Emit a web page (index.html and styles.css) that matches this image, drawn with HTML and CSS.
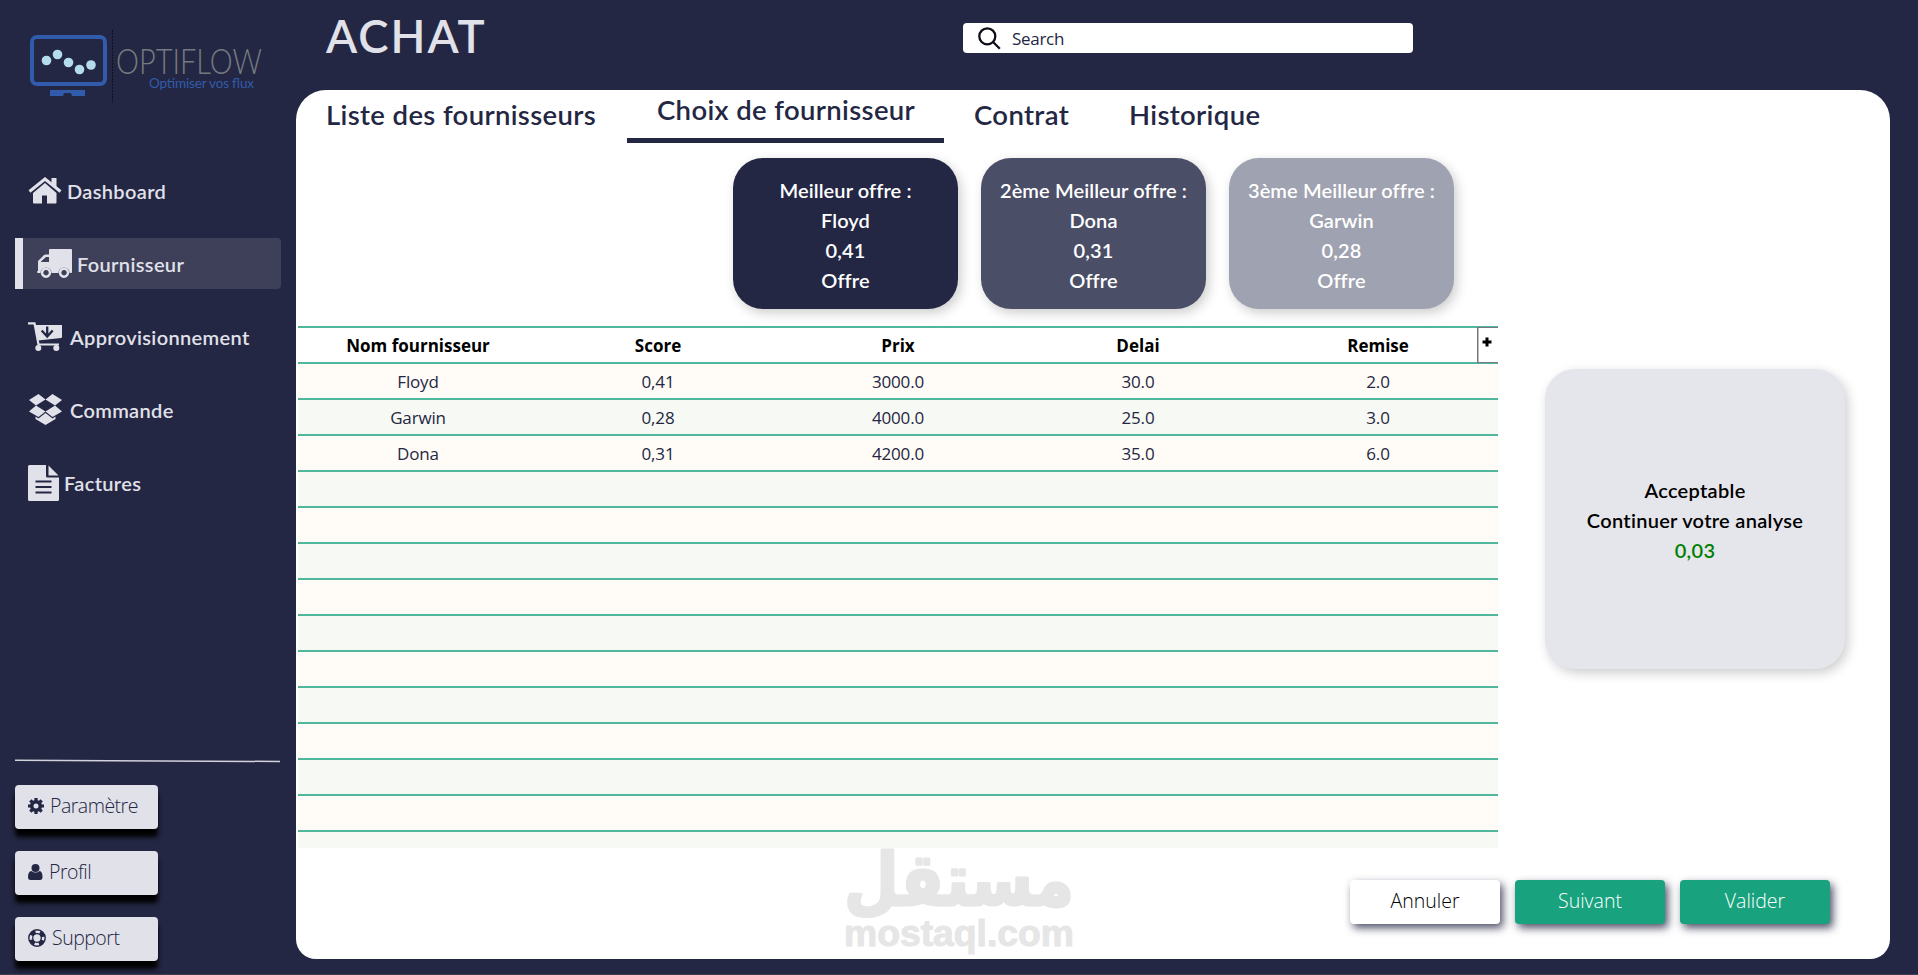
FILE: index.html
```html
<!DOCTYPE html>
<html lang="fr">
<head>
    <meta charset="UTF-8">
    <meta name="viewport" content="width=device-width, initial-scale=1.0">
    <title>Optiflow - Achat</title>
    <link rel="stylesheet" href="styles.css">
</head>
<body>
    <aside class="sidebar">
        <svg class="logo" width="240" height="80" viewBox="0 0 240 80">
            <rect x="7" y="12" width="73" height="47" rx="5" fill="none" stroke="#315bab" stroke-width="4"/>
            <path d="M25 65h35v6H47l-1-3h-7l-1 3H25z" fill="#315bab"/>
            <g fill="#b5dcea">
                <circle cx="21.5" cy="35.5" r="4.8"/>
                <circle cx="32.5" cy="29.5" r="4.8"/>
                <circle cx="43.5" cy="37.5" r="4.8"/>
                <circle cx="54.5" cy="44.5" r="4.8"/>
                <circle cx="66" cy="40" r="4.8"/>
            </g>
            <path d="M87.500 5v73" stroke="#10111c" stroke-dasharray="2 1"/>
            <text class="logo-name" x="91" y="48.500" textLength="146" lengthAdjust="spacingAndGlyphs">OPTIFLOW</text>
            <text class="logo-tag" x="124" y="62.500" textLength="105">Optimiser vos flux</text>
        </svg>

        <nav class="menu">
            <a href="#dashboard">
                <svg width="34" height="28" viewBox="0 0 34 28"><path d="M17 6l11.500 10v9.500q0 1-1 1H19v-8h-5v8H6q-1 0-1-1V16z"/><path d="M1.500 14.500L17 2l15.500 12.500" fill="none" stroke="#e1e1ea" stroke-width="3"/><path d="M23.500 1h5v9l-5-4z"/></svg>
                <span>Dashboard</span>
            </a>
            <a href="#fournisseur" class="active">
                <svg width="35" height="30" viewBox="0 0 35 30"><path fill-rule="evenodd" d="M13 0h21q1 0 1 1v22q0 1-1 1h-1.500a5.500 5.500 0 0 0-11 0h-7a5.500 5.500 0 0 0-11 0H1q-1 0-1-1t1-1V12l6-6q.5-.5 2-.5h3V1q0-1 1-1zM4 12.500V13h8V8H9z"/><path fill-rule="evenodd" d="M9 18.500a5.200 5.200 0 1 1-.1 0zM9 21a2.700 2.700 0 1 0 .1 0zM27 18.500a5.200 5.200 0 1 1-.1 0zM27 21a2.700 2.700 0 1 0 .1 0z"/></svg>
                <span>Fournisseur</span>
            </a>
            <a href="#approvisionnement" class="wide">
                <svg width="34" height="29" viewBox="0 0 34 29"><path d="M0 1.300h6.500l4 21.200H31" fill="none" stroke="#e1e1ea" stroke-width="2.200"/><path d="M7 3h27v12q0 1-1 1L10 18.500z"/><path d="M19.200 4.500V14m-5.500-5.500l5.500 6 5.500-6" fill="none" stroke="#242743" stroke-width="2.300"/><circle cx="10.300" cy="26" r="3"/><circle cx="28.300" cy="26" r="3"/></svg>
                <span>Approvisionnement</span>
            </a>
            <a href="#commande" class="wide">
                <svg width="34" height="31" viewBox="-1 0 34 31"><path d="M9.500 0L16.500 5.500 7 11.500 0 6zM23.500 0L33 6l-7 5.500-9.500-6zM0 17.500l7-6 9.500 6L9.500 23zM26 11.500l7 6-9.500 5.500-7-5.500z"/><path d="M6.500 22.500l3 2 7-5.500 7 5.500 3-2V25l-10 6-10-6z"/></svg>
                <span>Commande</span>
            </a>
            <a href="#factures">
                <svg width="31" height="36" viewBox="0 0 31 36"><path d="M1.500 0H18v11q0 1.500 1.500 1.500H31V34.500q0 1.500-1.500 1.500h-28Q0 36 0 34.500v-33Q0 0 1.500 0z"/><path d="M20.500.5L30.500 10.500h-10z"/><path d="M7.500 16.500h16M7.500 22h16M7.500 27.500h16" stroke="#242743" stroke-width="2"/></svg>
                <span>Factures</span>
            </a>
        </nav>

        <svg class="divider" width="265" height="4" viewBox="0 0 265 4"><path d="M0 1.200L265 2.500" stroke="#d2d2dc" stroke-width="1.500"/></svg>

        <div class="account">
            <button>
                <svg width="16" height="16" viewBox="0 0 16 16"><circle cx="8" cy="8" r="4.300" fill="none" stroke="#242743" stroke-width="3.600"/><path d="M8 0v3M8 13v3M0 8h3M13 8h3M2.300 2.300l2.200 2.200M11.500 11.500l2.200 2.200M2.300 13.700l2.200-2.200M11.500 4.500l2.200-2.200" stroke="#242743" stroke-width="3.200"/></svg>
                <span>Paramètre</span>
            </button>
            <button>
                <svg width="15" height="16" viewBox="0 0 15 16"><circle cx="7.500" cy="4" r="4" fill="#242743"/><path d="M3.500 7q4 3 8 0 3 .5 3 6 0 3-2.500 3H2.500Q0 16 0 13q0-5.500 3.500-6z" fill="#242743"/></svg>
                <span>Profil</span>
            </button>
            <button>
                <svg width="18" height="18" viewBox="0 0 18 18" fill="none" stroke="#242743"><circle cx="9" cy="9" r="8.200" stroke-width="1.400"/><circle cx="9" cy="9" r="4.300" stroke-width="1.300"/><circle cx="9" cy="9" r="6.200" stroke-width="4" stroke-dasharray="5.200 4.540" stroke-dashoffset="-2.270"/></svg>
                <span>Support</span>
            </button>
        </div>
    </aside>

    <main class="main">
        <header class="topbar">
            <h1>ACHAT</h1>
            <div class="search">
                <svg width="23" height="23" viewBox="0 0 23 23" fill="none" stroke="#0c0d18" stroke-width="2.300"><circle cx="9.300" cy="9.300" r="8"/><path d="M14.800 14.800l7 7"/></svg>
                <span>Search</span>
            </div>
        </header>

        <section class="panel">
            <nav class="tabs">
                <a href="#liste" class="liste">Liste des fournisseurs</a>
                <a href="#choix" class="current">Choix de fournisseur</a>
                <a href="#contrat" class="contrat">Contrat</a>
                <a href="#historique">Historique</a>
            </nav>

            <div class="offers">
                <div class="offer first">
                    <p>Meilleur offre :</p>
                    <p>Floyd</p>
                    <p>0,41</p>
                    <p>Offre</p>
                </div>
                <div class="offer second">
                    <p>2ème Meilleur offre :</p>
                    <p>Dona</p>
                    <p>0,31</p>
                    <p>Offre</p>
                </div>
                <div class="offer third">
                    <p>3ème Meilleur offre :</p>
                    <p>Garwin</p>
                    <p>0,28</p>
                    <p>Offre</p>
                </div>
            </div>

            <div class="content">
                <div class="table">
                    <div class="row head">
                        <span>Nom fournisseur</span><span>Score</span><span>Prix</span><span>Delai</span><span>Remise</span>
                        <button class="add"><svg width="10" height="10" viewBox="0 0 10 10"><path d="M5 .5v9M.5 5h9" stroke="#000" stroke-width="3"/></svg></button>
                    </div>
                    <div class="row"><span>Floyd</span><span>0,41</span><span>3000.0</span><span>30.0</span><span>2.0</span></div>
                    <div class="row"><span>Garwin</span><span>0,28</span><span>4000.0</span><span>25.0</span><span>3.0</span></div>
                    <div class="row"><span>Dona</span><span>0,31</span><span>4200.0</span><span>35.0</span><span>6.0</span></div>
                    <div class="row"></div>
                    <div class="row"></div>
                    <div class="row"></div>
                    <div class="row"></div>
                    <div class="row"></div>
                    <div class="row"></div>
                    <div class="row"></div>
                    <div class="row"></div>
                    <div class="row"></div>
                    <div class="row"></div>
                    <div class="row"></div>
                </div>
                <div class="analysis">
                    <p>Acceptable</p>
                    <p>Continuer votre analyse</p>
                    <p class="ok">0,03</p>
                </div>
            </div>

            <div class="actions">
                <button class="cancel">Annuler</button>
                <button class="next">Suivant</button>
                <button class="validate">Valider</button>
            </div>

            <svg class="watermark" width="240" height="116" viewBox="0 0 240 116">
                <text class="wm-ar" x="120" y="61" text-anchor="middle" textLength="230" lengthAdjust="spacingAndGlyphs">مستقل</text>
                <text class="wm-lat" x="5" y="101.500" textLength="230" lengthAdjust="spacingAndGlyphs">mostaql.com</text>
            </svg>
        </section>
    </main>
</body>
</html>
```

FILE: styles.css
```css
:root {
    --navy: #242743;
    --light: #e1e1ea;
    --green: #18a37e;
    --line: #50b79d;
    --title-font: Lato, "Open Sans", sans-serif;
    --text-font: "Open Sans", "Noto Sans", sans-serif;
}
* {
    box-sizing: border-box;
}
body {
    margin: 0;
    height: 975px;
    display: flex;
    overflow: hidden;
    background-color: var(--navy);
    border-bottom: 1px solid #3d3c50;
    font-family: var(--text-font);
    color: var(--navy);
}
a {
    text-decoration: none;
    color: inherit;
}
p, h1 {
    margin: 0;
}
button {
    border: none;
    padding: 0;
    font-family: inherit;
    font-weight: 300;
    font-size: 19.5px;
}

/* Sidebar */
.sidebar {
    width: 296px;
    padding: 25px 15px 0;
    display: flex;
    flex-direction: column;
}
.logo {
    flex: none;
    margin-left: 10px;
    overflow: visible;
}
.logo-name {
    font-family: Lato, sans-serif;
    font-weight: 300;
    font-size: 35px;
    fill: #747b80;
}
.logo-tag {
    font-family: Lato, sans-serif;
    font-size: 13.5px;
    fill: #315bab;
}
.menu {
    margin-top: 60px;
    display: flex;
    flex-direction: column;
    gap: 22px;
}
.menu a {
    height: 51px;
    width: 266px;
    display: flex;
    align-items: center;
    padding-left: 13px;
    font-family: var(--title-font);
    font-size: 20px;
    font-weight: 600;
    letter-spacing: 0.35px;
    color: var(--light);
    fill: var(--light);
}
.menu span {
    margin-left: 5px;
}
.menu .wide span {
    margin-left: 8px;
}
.menu a.active {
    background-color: #3e405a;
    border-left: 8px solid var(--light);
    border-radius: 0 4px 4px 0;
    padding-left: 14px;
}
.divider {
    margin-top: 251px;
    flex: none;
}
.account {
    margin-top: 22px;
    display: flex;
    flex-direction: column;
    gap: 22px;
}
.account button {
    width: 143px;
    height: 44px;
    display: flex;
    align-items: center;
    gap: 6px;
    padding: 0 0 3px 13px;
    background-color: var(--light);
    color: var(--navy);
    letter-spacing: -0.5px;
    border-radius: 4px;
    box-shadow: 0 8px 5px #000;
}

/* Header */
.main {
    flex: 1;
    padding-right: 28px;
}
.topbar {
    height: 90px;
    display: flex;
    align-items: flex-start;
    padding-left: 30px;
}
h1 {
    width: 637px;
    font-family: var(--title-font);
    font-size: 45.5px;
    font-weight: 600;
    letter-spacing: 2px;
    line-height: 54px;
    padding-top: 9px;
    color: var(--light);
}
.search {
    width: 450px;
    height: 30px;
    margin-top: 23px;
    padding-left: 15px;
    display: flex;
    align-items: center;
    gap: 11px;
    background-color: #fff;
    border-radius: 4px;
    font-size: 17px;
    letter-spacing: -0.3px;
}

/* Panel */
.panel {
    position: relative;
    height: 869px;
    background-color: #fff;
    border-radius: 30px 30px 20px 20px;
}
.tabs {
    display: flex;
    height: 53px;
    font-family: var(--title-font);
    font-size: 27.5px;
    font-weight: 600;
    letter-spacing: 0.35px;
    line-height: 48px;
}
.tabs a {
    padding: 1px 0 0 30px;
    white-space: nowrap;
}
.tabs .liste {
    width: 331px;
}
.tabs .contrat {
    width: 155px;
}
.tabs .current {
    width: 317px;
    padding-top: 0;
    line-height: 40px;
    border-bottom: 5px solid var(--navy);
}
.offers {
    display: flex;
    gap: 23px;
    padding: 15px 0 0 437px;
}
.offer, .analysis {
    text-align: center;
    font-family: var(--title-font);
    font-size: 20px;
    font-weight: 600;
    letter-spacing: 0.1px;
    line-height: 30px;
    border-radius: 30px;
    box-shadow: 3px 4px 12px rgba(0, 0, 0, 0.2);
}
.offer {
    width: 225px;
    height: 151px;
    padding-top: 17px;
    color: #fff;
    white-space: nowrap;
}
.offer.first {
    background-color: var(--navy);
}
.offer.second {
    background-color: #4b4e67;
}
.offer.third {
    background-color: #9fa2b0;
}
.content {
    display: flex;
    align-items: flex-start;
    padding: 17px 0 0 2px;
}
.table {
    width: 1200px;
    height: 522px;
    overflow: hidden;
}
.row {
    height: 36px;
    display: flex;
    border-top: 2px solid var(--line);
    font-size: 17px;
    letter-spacing: -0.15px;
    line-height: 35px;
}
.row span {
    width: 240px;
    text-align: center;
}
.row:nth-child(even) {
    background-color: #fffbf6;
}
.row:nth-child(odd) {
    background-color: #f7f9f4;
}
.row.head {
    position: relative;
    background-color: #fff;
    font-weight: 700;
    letter-spacing: 0;
    color: #000;
}
.add {
    position: absolute;
    right: 0;
    top: -1px;
    width: 21px;
    height: 36px;
    padding: 0 2px 6px 0;
    display: flex;
    align-items: center;
    justify-content: center;
    background-color: #fff;
    border: solid #767883;
    border-width: 1px 0 1px 1px;
    box-shadow: inset 1px 0 #bbb;
}
.analysis {
    width: 300px;
    height: 300px;
    padding-top: 1px;
    margin: 43px 0 0 47px;
    background-color: #e5e6eb;
    display: flex;
    flex-direction: column;
    justify-content: center;
    letter-spacing: 0.3px;
    color: #000;
}
.ok {
    color: #008000;
}
.actions {
    display: flex;
    gap: 15px;
    padding: 32px 0 0 1054px;
}
.actions button {
    width: 150px;
    height: 44px;
    padding-bottom: 3px;
    border-radius: 4px;
    background-color: var(--green);
    color: #fff;
    box-shadow: 3px 4px 8px rgba(36, 39, 67, 0.8);
}
.actions .cancel {
    background-color: #fff;
    color: #000;
}

/* Watermark over the bottom of the panel */
.watermark {
    position: absolute;
    left: 543px;
    top: 754px;
    overflow: visible;
    fill: #e6e6e6;
    stroke: #e6e6e6;
    stroke-linejoin: round;
}
.wm-ar {
    font-family: "DejaVu Sans", sans-serif;
    font-weight: 700;
    font-size: 72px;
    stroke-width: 3px;
}
.wm-lat {
    font-family: "Liberation Sans", sans-serif;
    font-weight: 700;
    font-size: 37px;
    stroke-width: 1px;
}
```
